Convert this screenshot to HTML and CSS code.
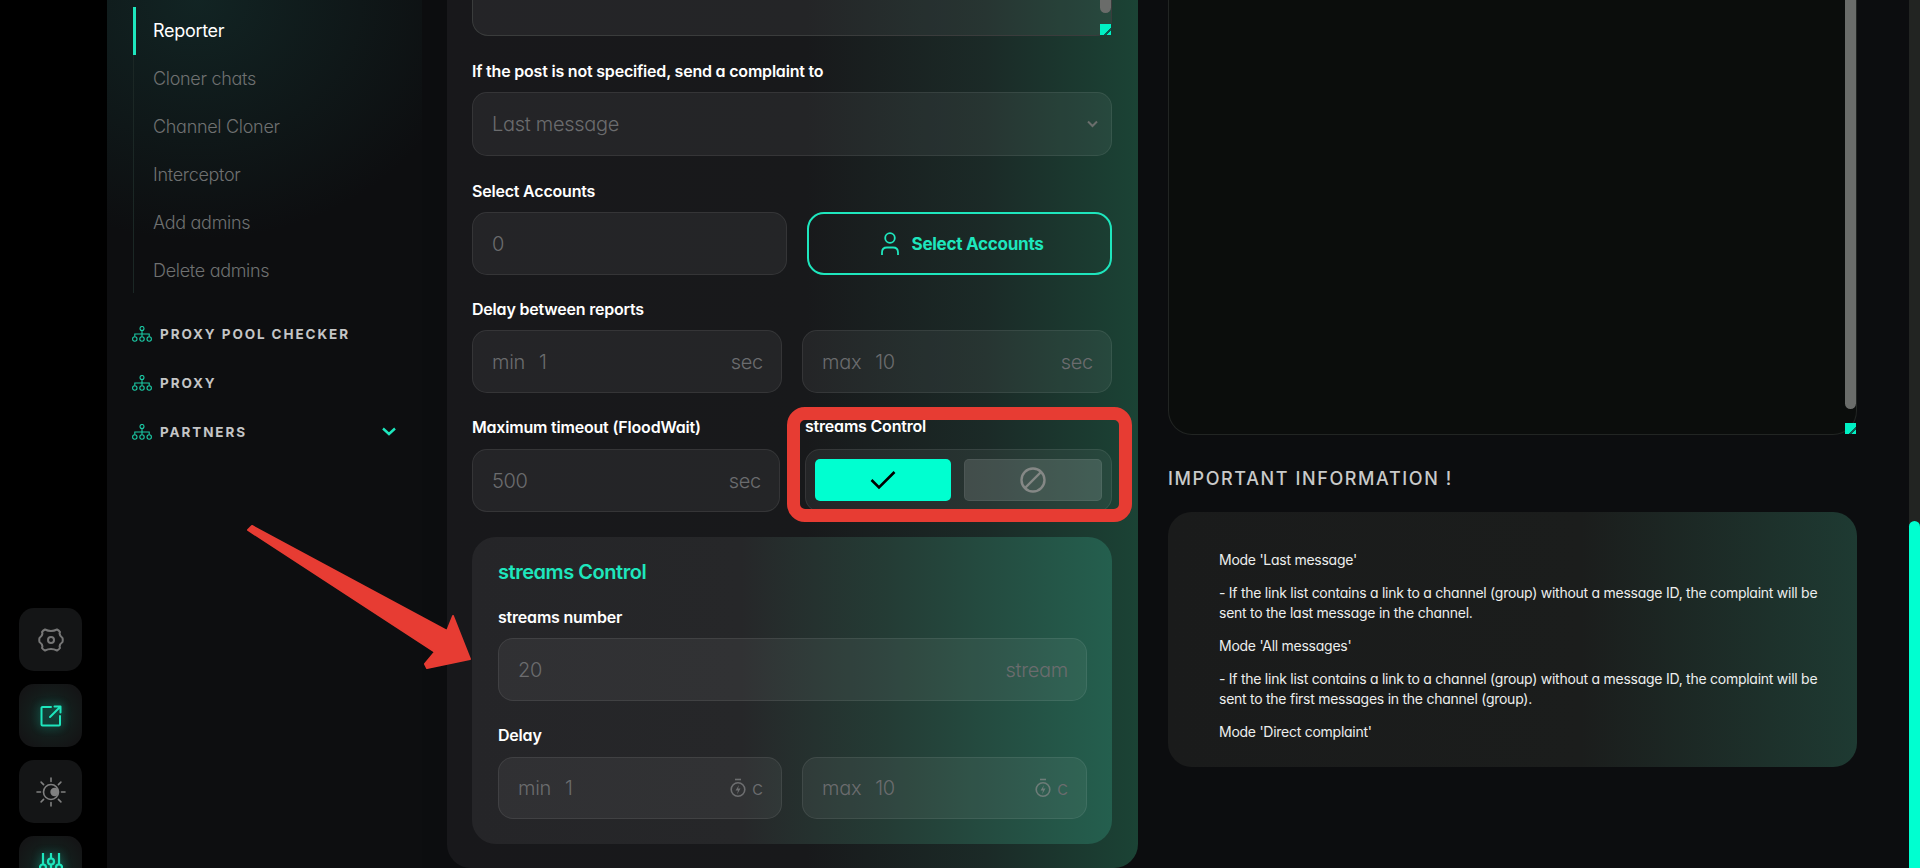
FILE: index.html
```html
<!DOCTYPE html>
<html>

<head>
  <title>Reporter</title>
  <link rel="stylesheet" href="styles.css">
</head>

<body>
  <div class="rail">
    <div class="rail-btn">
      <svg width="26" height="26" viewBox="0 0 26 26" fill="none" stroke="#767676" stroke-width="2" stroke-linejoin="round"><path d="M7 2.500Q13 5.500 19 2.500Q21 3.500 22 5Q20.500 8 24.500 11Q25 13 24.500 15Q20.500 18 22 21Q21 22.500 19 23.500Q13 20.500 7 23.500Q5 22.500 4 21Q5.500 18 1.500 15Q1 13 1.500 11Q5.500 8 4 5Q5 3.500 7 2.500Z"/><circle cx="13" cy="13" r="3"/></svg>
    </div>
    <div class="rail-btn rail-btn-on">
      <svg width="22" height="22" viewBox="0 0 22 22" fill="none" stroke="#1ee6bd" stroke-width="2" stroke-linecap="round" stroke-linejoin="round"><path d="M11 2H2.500a1 1 0 0 0-1 1v16.500a1 1 0 0 0 1 1H19a1 1 0 0 0 1-1V11"/><path d="M10 12L20.500 1.500M14.500 1.500h6v6"/></svg>
    </div>
    <div class="rail-btn">
      <svg width="30" height="30" viewBox="0 0 30 30" fill="none" stroke="#808080" stroke-width="1.600" stroke-linecap="round"><circle cx="15" cy="15" r="7.500"/><path d="M17 8.500a7 7 0 0 1 0 13a6.800 6.800 0 0 0 0-13z" fill="#808080" stroke="none"/><circle cx="18.500" cy="15" r="4.200" fill="#808080" stroke="none"/><path d="M15 1v3.500M15 25.500V29M1 15h3.500M25.500 15H29M5.100 5.100l2.500 2.500M22.400 22.400l2.500 2.500M5.100 24.900l2.500-2.500M22.400 7.600l2.500-2.500"/></svg>
    </div>
    <div class="rail-btn rail-btn-on">
      <svg width="24" height="30" viewBox="0 0 24 30" fill="none" stroke="#1ee6bd" stroke-width="2.200"><path d="M4 0v11.500M12 0v5.500M12 11.500V30M20 0v11.500"/><circle cx="12" cy="8.500" r="3"/><circle cx="4" cy="14.500" r="3"/><circle cx="20" cy="14.500" r="3"/></svg>
    </div>
  </div>

  <div class="sidebar">
    <div class="sidebar-inner">
      <ul class="subnav">
        <li class="subnav-item subnav-on">Reporter</li>
        <li class="subnav-item">Cloner chats</li>
        <li class="subnav-item">Channel Cloner</li>
        <li class="subnav-item">Interceptor</li>
        <li class="subnav-item">Add admins</li>
        <li class="subnav-item">Delete admins</li>
      </ul>
      <div class="group-link">
        <svg class="net" width="20" height="16" viewBox="0 0 20 16" fill="none" stroke="#1bcba6" stroke-width="1.100"><circle cx="10" cy="2.500" r="2"/><path d="M10 4.500v6M2.800 10.500V8h14.400v2.500"/><circle cx="2.800" cy="13" r="2.200"/><circle cx="10" cy="13" r="2.200"/><circle cx="17.200" cy="13" r="2.200"/></svg>
        <span>Proxy pool checker</span>
      </div>
      <div class="group-link">
        <svg class="net" width="20" height="16" viewBox="0 0 20 16" fill="none" stroke="#1bcba6" stroke-width="1.100"><circle cx="10" cy="2.500" r="2"/><path d="M10 4.500v6M2.800 10.500V8h14.400v2.500"/><circle cx="2.800" cy="13" r="2.200"/><circle cx="10" cy="13" r="2.200"/><circle cx="17.200" cy="13" r="2.200"/></svg>
        <span>Proxy</span>
      </div>
      <div class="group-link">
        <svg class="net" width="20" height="16" viewBox="0 0 20 16" fill="none" stroke="#1bcba6" stroke-width="1.100"><circle cx="10" cy="2.500" r="2"/><path d="M10 4.500v6M2.800 10.500V8h14.400v2.500"/><circle cx="2.800" cy="13" r="2.200"/><circle cx="10" cy="13" r="2.200"/><circle cx="17.200" cy="13" r="2.200"/></svg>
        <span>Partners</span>
        <svg class="group-chev" width="14" height="9" viewBox="0 0 14 9" fill="none" stroke="#1ee6bd" stroke-width="2.400"><path d="M1 1.500l6 5.500 6-5.500"/></svg>
      </div>
    </div>
  </div>

  <div class="main">
    <div class="area">
      <div class="area-thumb area-thumb-short"></div>
      <div class="area-grip"></div>
    </div>

    <div class="label">If the post is not specified, send a complaint to</div>
    <div class="field field-tall">
      <span class="ph">Last message</span>
      <svg class="select-chev" width="11" height="8" viewBox="0 0 11 8" fill="none" stroke="#6a6e6c" stroke-width="2"><path d="M1 1.500l4.500 4.500 4.500-4.500"/></svg>
    </div>

    <div class="label">Select Accounts</div>
    <div class="row row-accounts">
      <div class="field"><span class="ph">0</span></div>
      <div class="pick-btn">
        <svg width="18" height="24" viewBox="0 0 18 24" fill="none" stroke="#1ee6bd" stroke-width="1.800"><circle cx="9" cy="6" r="4.800"/><path d="M1 23v-2.500c0-3 2-5 5-5h6c3 0 5 2 5 5V23"/></svg>
        Select Accounts
      </div>
    </div>

    <div class="label label-tight">Delay between reports</div>
    <div class="row row-delay">
      <div class="field"><span class="ph ph-key">min</span><span class="ph ph-val">1</span><span class="ph">sec</span></div>
      <div class="field"><span class="ph ph-key">max</span><span class="ph ph-val">10</span><span class="ph">sec</span></div>
    </div>

    <div class="row row-timeout row-labels">
      <div class="label">Maximum timeout (FloodWait)</div>
      <div class="label label-up">streams Control</div>
    </div>
    <div class="row row-timeout">
      <div class="field"><span class="ph ph-val">500</span><span class="ph">sec</span></div>
      <div class="toggle">
        <div class="toggle-btn toggle-yes">
          <svg width="26" height="20" viewBox="0 0 26 20" fill="none" stroke="#000" stroke-width="2.600"><path d="M1.500 10l7.500 7.500L24.500 2"/></svg>
        </div>
        <div class="toggle-btn toggle-no">
          <svg width="26" height="26" viewBox="0 0 26 26" fill="none" stroke="#858886" stroke-width="2.400"><circle cx="13" cy="13" r="11.500"/><path d="M5 21L21 5"/></svg>
        </div>
      </div>
    </div>

    <div class="inner">
      <div class="inner-title">streams Control</div>
      <div class="label">streams number</div>
      <div class="field"><span class="ph ph-val">20</span><span class="ph">stream</span></div>
      <div class="label">Delay</div>
      <div class="row row-delay-inner">
        <div class="field field-low">
          <span class="ph ph-key">min</span><span class="ph ph-val">1</span>
          <svg class="timer" width="16" height="20" viewBox="0 0 16 20" fill="none" stroke="#6d6e70" stroke-width="1.600"><path d="M5 1.500h6"/><circle cx="8" cy="11.500" r="6.800"/><path d="M9 7L5.500 12.500H8L7 16.500L10.500 10.500H8Z" fill="#6d6e70" stroke="none"/></svg>
          <span class="ph">c</span>
        </div>
        <div class="field field-low">
          <span class="ph ph-key">max</span><span class="ph ph-val">10</span>
          <svg class="timer" width="16" height="20" viewBox="0 0 16 20" fill="none" stroke="#6d7c78" stroke-width="1.600"><path d="M5 1.500h6"/><circle cx="8" cy="11.500" r="6.800"/><path d="M9 7L5.500 12.500H8L7 16.500L10.500 10.500H8Z" fill="#6d7c78" stroke="none"/></svg>
          <span class="ph">c</span>
        </div>
      </div>
    </div>
  </div>

  <div class="aside">
    <div class="area area-log">
      <div class="area-thumb"></div>
      <div class="area-grip"></div>
    </div>
    <h3 class="info-title">Important information !</h3>
    <div class="info">
      <p>Mode 'Last message'</p>
      <p>- If the link list contains a link to a channel (group) without a message ID, the complaint will be sent to the last message in the channel.</p>
      <p>Mode 'All messages'</p>
      <p>- If the link list contains a link to a channel (group) without a message ID, the complaint will be sent to the first messages in the channel (group).</p>
      <p>Mode 'Direct complaint'</p>
    </div>
  </div>

  <div class="page-scroll">
    <div class="page-thumb"></div>
  </div>

  <!-- annotations drawn over the screenshot -->
  <div class="mark-box"></div>
  <svg class="mark-arrow" width="240" height="160" viewBox="0 0 240 160">
    <path d="M7 4L202 109L208 94L225 137L182 146L180 142L190 130L3 8Z" fill="#e73c33" stroke="#e73c33" stroke-width="2" stroke-linejoin="round"/>
  </svg>
</body>

</html>
```

FILE: styles.css
```css
* {
  box-sizing: border-box;
}

body {
  margin: 0;
  height: 868px;
  overflow: hidden;
  display: flex;
  background: #0c0d0f;
  color: white;
  font-family: Inter, "Noto Sans", sans-serif;
  font-feature-settings: "cv11";
  letter-spacing: -0.3px;
}

/* left icon rail */
.rail {
  width: 107px;
  flex: none;
  background: #000;
  padding: 608px 0 0 19px;
  display: flex;
  flex-direction: column;
  gap: 13px;
}

.rail-btn {
  width: 63px;
  height: 63px;
  flex: none;
  border-radius: 15px;
  background: #141516;
  display: flex;
  align-items: center;
  justify-content: center;
}

.rail-btn-on {
  background: radial-gradient(circle at 50% 50%, #10302b 0, #141b1a 55%, #141516 80%);
}

.rail-btn-on svg {
  filter: drop-shadow(0 0 4px rgba(30, 230, 189, 0.5));
}

/* sidebar */
.sidebar {
  width: 340px;
  flex: none;
}

.sidebar-inner {
  width: 315px;
  height: 868px;
  padding: 7px 25px 0 25px;
  background:
    radial-gradient(ellipse 280px 240px at 90px 0, rgba(24, 66, 62, 0.42), rgba(24, 66, 62, 0) 100%),
    #0d0e10;
}

.subnav {
  list-style: none;
  margin: 0 0 16px 1px;
  padding: 0;
  height: 286px;
  border-left: 1px solid #1b2725;
}

.subnav-item {
  height: 48px;
  line-height: 48px;
  padding-left: 17px;
  font-size: 18px;
  font-weight: 300;
  color: #6f7171;
  margin-left: -1px;
  border-left: 3px solid transparent;
}

.subnav-on {
  color: white;
  font-weight: 400;
  border-left-color: #1ee6bd;
}

.group-link {
  height: 49px;
  display: flex;
  align-items: center;
  gap: 8px;
  font-size: 13.500px;
  font-weight: 700;
  letter-spacing: 1.900px;
  text-transform: uppercase;
  color: #c4c5c6;
}

.net {
  flex: none;
}

.group-chev {
  margin-left: auto;
  margin-right: 1px;
}

/* middle form panel */
.main {
  width: 691px;
  flex: none;
  height: 868px;
  padding: 0 26px 25px 25px;
  border-radius: 0 0 24px 24px;
  background: linear-gradient(90deg, #18181b 0, #18191b 52%, #1b2a27 78%, #1b4335 100%);
}

.area {
  height: 36px;
  position: relative;
  border: 1px solid #3a3c3c;
  border-top: 0;
  border-radius: 0 0 16px 16px;
  background: rgba(255, 255, 255, 0.055);
}

.area-thumb {
  position: absolute;
  top: 0;
  right: 0;
  width: 11px;
  height: 409px;
  border-radius: 0 0 6px 6px;
  background: #6a6c6a;
}

.area-thumb-short {
  height: 13px;
}

.area-grip {
  position: absolute;
  right: 0;
  bottom: 0;
  width: 11px;
  height: 11px;
  background: linear-gradient(135deg, #00f0c4 68%, #0c5c50 68%, #0c5c50 78%, #00f0c4 78%);
}

.label {
  height: 20px;
  line-height: 20px;
  margin: 25px 0 11px;
  font-size: 16px;
  font-weight: 600;
  letter-spacing: -0.2px;
  white-space: nowrap;
}

.label-tight {
  margin-top: 24px;
}

.field {
  height: 63px;
  padding: 0 18px 0 19px;
  display: flex;
  align-items: center;
  border: 1px solid rgba(255, 255, 255, 0.08);
  border-radius: 15px;
  background: rgba(255, 255, 255, 0.055);
}

.field-tall {
  height: 64px;
  justify-content: space-between;
  padding-right: 13px;
}

.field-low {
  height: 62px;
}

.ph {
  font-size: 20px;
  font-weight: 300;
  color: #6b6c6e;
}

.ph-key {
  margin-right: 14px;
}

.ph-val {
  margin-right: auto;
}

.row {
  display: grid;
  column-gap: 20px;
}

.row-accounts {
  grid-template-columns: 315px 305px;
}

.row-delay {
  grid-template-columns: 310px 310px;
}

.row-delay-inner {
  grid-template-columns: 284px 285px;
}

.row-timeout {
  grid-template-columns: 308px 307px;
  column-gap: 25px;
}

.row-labels .label {
  margin-top: 24px;
  margin-bottom: 12px;
}

.row-labels .label-up {
  margin-top: 23px;
}

.pick-btn {
  height: 63px;
  padding-left: 6px;
  display: flex;
  align-items: center;
  justify-content: center;
  gap: 12px;
  border: 2px solid #1ee6bd;
  border-radius: 17px;
  color: #1ee6bd;
  font-size: 17.100px;
  font-weight: 700;
}

.toggle {
  height: 63px;
  padding: 9px 9px 10px;
  display: flex;
  gap: 13px;
  border: 1px solid rgba(255, 255, 255, 0.08);
  border-radius: 15px;
  background: rgba(255, 255, 255, 0.055);
}

.toggle-btn {
  flex: 1;
  display: flex;
  align-items: center;
  justify-content: center;
  border-radius: 5px;
}

.toggle-yes {
  background: #00ffd0;
}

.toggle-no {
  background: rgba(255, 255, 255, 0.13);
  border: 1px solid rgba(255, 255, 255, 0.06);
}

.inner {
  height: 307px;
  margin-top: 25px;
  padding: 23px 25px 0 26px;
  border-radius: 24px;
  background: linear-gradient(90deg, #252528 0, #262729 42%, #243c35 65%, #245f4e 100%);
}

.inner-title {
  height: 24px;
  line-height: 24px;
  font-size: 20px;
  font-weight: 600;
  letter-spacing: -0.45px;
  color: #1ee6bd;
}

.inner .label {
  margin-top: 23px;
}

.inner .label + .field + .label {
  margin-top: 24px;
  margin-bottom: 12px;
}

.timer {
  margin-right: 6px;
}

.select-chev {
  flex: none;
}

/* right column */
.aside {
  width: 689px;
  flex: none;
  margin-left: 30px;
}

.area-log {
  height: 435px;
  background: #0b0d0c;
  border-color: #222523;
  border-radius: 0 0 24px 24px;
}

.info-title {
  margin: 34px 0 23px;
  height: 20px;
  line-height: 20px;
  font-size: 18px;
  font-weight: 500;
  letter-spacing: 1.600px;
  text-transform: uppercase;
  color: #c9caca;
}

.info {
  height: 255px;
  padding: 38px 30px 0 51px;
  border-radius: 24px;
  background: linear-gradient(90deg, #1a1b1b 0, #1b1d1c 60%, #1e3a32 100%);
}

.info p {
  margin: 0 0 13px;
  font-size: 14px;
  font-weight: 400;
  line-height: 20px;
  letter-spacing: -0.26px;
  color: #eceeed;
}

/* page scrollbar */
.page-scroll {
  width: 11px;
  flex: none;
  margin-left: auto;
  padding-top: 521px;
  background: #222422;
}

.page-thumb {
  height: 347px;
  border-radius: 6px 6px 0 0;
  background: #00ffd0;
}

/* red annotations */
.mark-box {
  position: absolute;
  left: 787px;
  top: 407px;
  width: 345px;
  height: 115px;
  border: 13px solid #e73c33;
  border-radius: 18px;
}

.mark-arrow {
  position: absolute;
  left: 245px;
  top: 522px;
}
```
